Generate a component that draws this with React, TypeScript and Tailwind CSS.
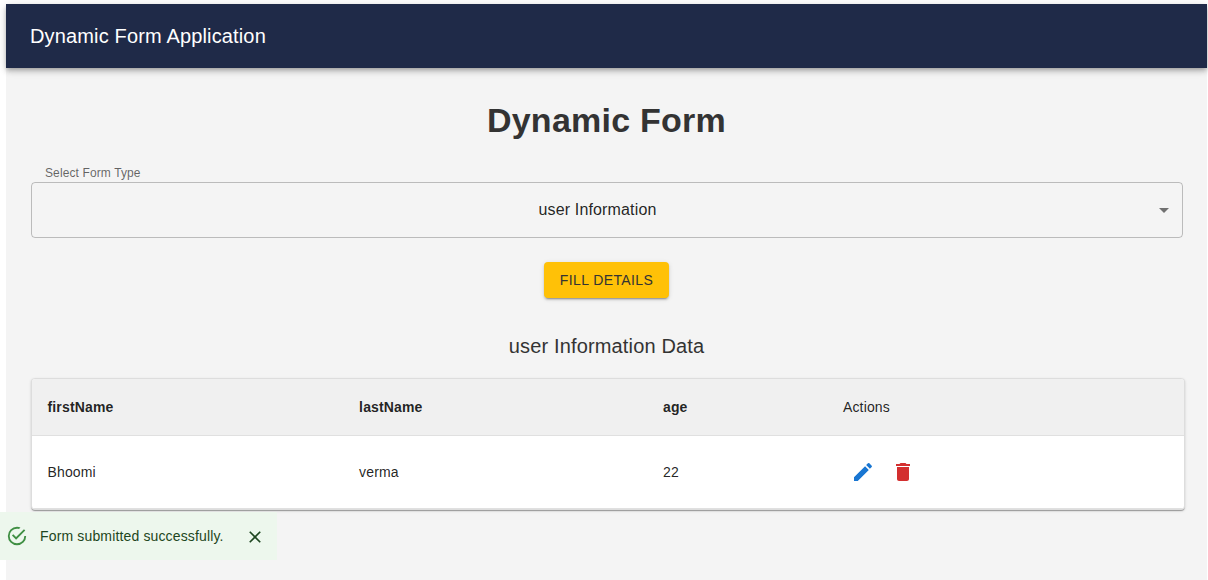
import React from 'react';

const columns = ['firstName', 'lastName', 'age'];
const rows = [{ firstName: 'Bhoomi', lastName: 'verma', age: '22' }];

function Header() {
  return (
    <header className="flex h-16 items-center bg-[#1f2a48] px-6 shadow-[0px_2px_4px_-1px_rgba(0,0,0,0.2),0px_4px_5px_0px_rgba(0,0,0,0.14),0px_1px_10px_0px_rgba(0,0,0,0.12)]">
      <div className="text-[20px] leading-8 tracking-[0.0075em] text-white">Dynamic Form Application</div>
    </header>
  );
}

function FormTypeSelect() {
  return (
    <div className="flex flex-col">
      <label className="ml-[14.5px] h-[17px] text-[12px] leading-[17px] tracking-[0.00938em] text-black/60">Select Form Type</label>
      <button className="relative mr-[0.5px] h-14 rounded border border-black/[0.23] pb-0.5 pr-[18px] text-center text-[16px] leading-[23px] tracking-[0.00938em] text-black/[0.87]">
        user Information
        <svg className="absolute right-[6px] top-[15px] h-6 w-6 fill-black/[0.54]" viewBox="0 0 24 24">
          <path d="M7 10l5 5 5-5z" />
        </svg>
      </button>
    </div>
  );
}

function DataTable() {
  return (
    <div className="-mr-[1.5px] overflow-hidden rounded border border-[#ddd] bg-white shadow-[0px_2px_1px_-1px_rgba(0,0,0,0.2),0px_1px_1px_0px_rgba(0,0,0,0.14),0px_1px_3px_0px_rgba(0,0,0,0.12)]">
      <table className="w-full table-fixed border-separate border-spacing-0 text-left text-[14px] tracking-[0.01071em] text-black/[0.87]">
        <colgroup>
          <col className="w-[311.6px]" />
          <col className="w-[303.9px]" />
          <col className="w-[180px]" />
          <col />
        </colgroup>
        <thead>
          <tr className="h-[57px] bg-[#f0f0f0]">
            {columns.map((column) => (
              <th key={column} className="border-b border-[#e0e0e0] px-4 font-bold leading-6">{column}</th>
            ))}
            <th className="border-b border-[#e0e0e0] px-4 font-normal leading-6">Actions</th>
          </tr>
        </thead>
        <tbody>
          {rows.map((row) => (
            <tr key={row.firstName} className="h-[73px]">
              <td className="border-b border-[#e0e0e0] px-4">{row.firstName}</td>
              <td className="border-b border-[#e0e0e0] px-4">{row.lastName}</td>
              <td className="border-b border-[#e0e0e0] px-4">{row.age}</td>
              <td className="border-b border-[#e0e0e0] px-4">
                <div className="flex">
                  <button className="p-2" aria-label="Edit">
                    <svg className="h-6 w-6 fill-[#1976d2]" viewBox="0 0 24 24">
                      <path d="M3 17.25V21h3.75L17.81 9.94l-3.75-3.75zM20.71 7.04c.39-.39.39-1.02 0-1.41l-2.34-2.34a.9959.9959 0 0 0-1.41 0l-1.83 1.83 3.75 3.75z" />
                    </svg>
                  </button>
                  <button className="p-2" aria-label="Delete">
                    <svg className="h-6 w-6 fill-[#d32f2f]" viewBox="0 0 24 24">
                      <path d="M6 19c0 1.1.9 2 2 2h8c1.1 0 2-.9 2-2V7H6zM19 4h-3.5l-1-1h-5l-1 1H5v2h14z" />
                    </svg>
                  </button>
                </div>
              </td>
            </tr>
          ))}
        </tbody>
      </table>
    </div>
  );
}

function SuccessToast() {
  return (
    <div className="absolute left-0 top-[512px] flex h-12 w-[277px] items-center bg-[#edf7ed] pl-[6px]">
      <svg className="h-[22px] w-[22px] fill-[#3f8f43]" viewBox="0 0 24 24">
        <path d="M20,12A8,8 0 0,1 12,20A8,8 0 0,1 4,12A8,8 0 0,1 12,4C12.76,4 13.5,4.11 14.2,4.31L15.77,2.74C14.61,2.26 13.34,2 12,2A10,10 0 0,0 2,12A10,10 0 0,0 12,22A10,10 0 0,0 22,12M7.91,10.08L6.5,11.5L11,16L21,6L19.59,4.58L11,13.17L7.91,10.08Z" />
      </svg>
      <span className="ml-3 whitespace-nowrap text-[14px] leading-5 tracking-[0.01071em] text-[#1e4620]">Form submitted successfully.</span>
      <button className="absolute left-[245px] top-[15px]" aria-label="Close">
        <svg className="h-5 w-5 fill-[#1e4620]" viewBox="0 0 24 24">
          <path d="M19 6.41L17.59 5 12 10.59 6.41 5 5 6.41 10.59 12 5 17.59 6.41 19 12 13.41 17.59 19 19 17.59 13.41 12z" />
        </svg>
      </button>
    </div>
  );
}

export default function App() {
  return (
    <div className="relative h-[580px] overflow-hidden bg-white pl-[6px] pr-px pt-1 font-['Liberation_Sans',Arial,sans-serif]">
      <div className="h-full bg-[#f4f4f4]">
        <Header />
        <main className="flex flex-col pl-[24.5px] pr-6 pt-[31px]">
          <h1 className="mr-[0.5px] text-center text-[34px] font-bold leading-[42px] tracking-[0.00735em] text-[#333]">Dynamic Form</h1>
          <div className="mt-6">
            <FormTypeSelect />
          </div>
          <button className="mr-[0.5px] mt-6 h-9 self-center rounded bg-[#ffc107] px-4 text-[14px] leading-[24.5px] tracking-[0.02857em] text-[#333] shadow-[0px_3px_1px_-2px_rgba(0,0,0,0.2),0px_2px_2px_0px_rgba(0,0,0,0.14),0px_1px_5px_0px_rgba(0,0,0,0.12)]">
            FILL DETAILS
          </button>
          <h2 className="mb-4 mr-[0.5px] mt-8 text-center text-[20px] leading-8 tracking-[0.0075em] text-[#333]">user Information Data</h2>
          <DataTable />
        </main>
      </div>
      <SuccessToast />
    </div>
  );
}
